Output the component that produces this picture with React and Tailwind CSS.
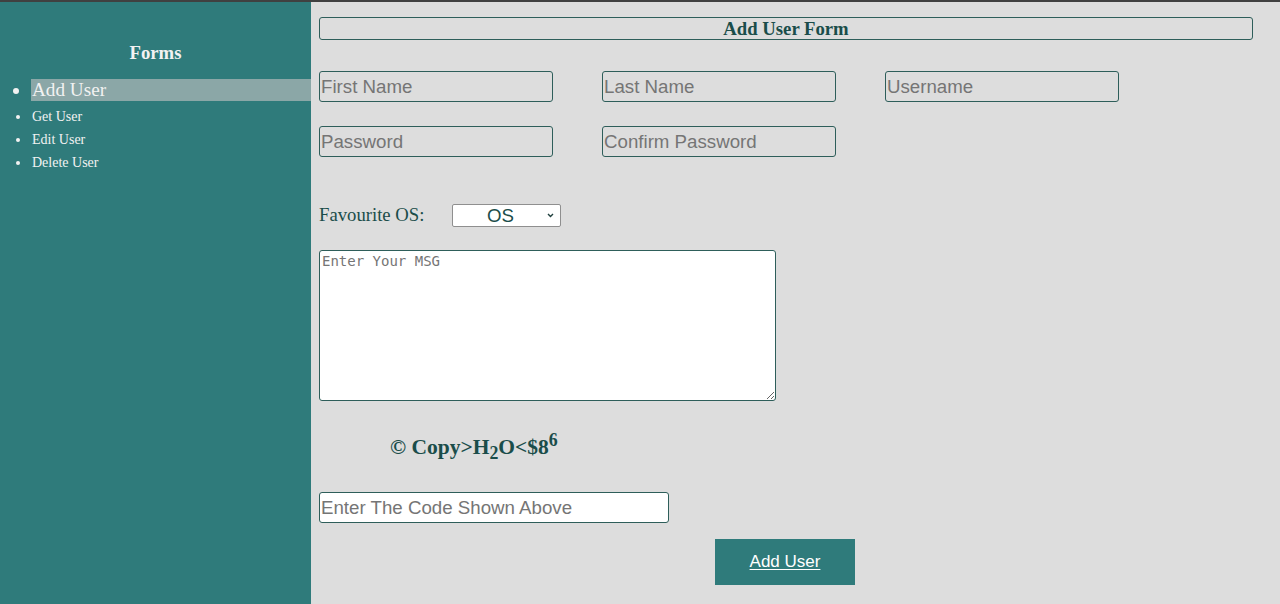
import React from "react";

export default function App() {
  const serif = { fontFamily: '"Liberation Serif", "Times New Roman", serif' };
  const inputCls =
    "w-[234px] h-[31px] border border-[#2e5e5a] rounded-[3px] bg-transparent px-[1px] text-[18.7px] text-[#1a4d4a] placeholder:text-[#757575] outline-none";
  return (
    <div
      className="w-[1280px] h-[604px] flex border-t-2 border-[#404040] bg-[#dddddd] overflow-hidden"
      style={{ fontFamily: '"Liberation Sans", Arial, sans-serif' }}
    >
      <aside className="w-[311px] shrink-0 bg-[#2f7b7b] text-[#f2f2f2]" style={serif}>
        <h3 className="text-center font-bold text-[18.72px] leading-[22px] mt-[40px]">Forms</h3>
        <ul className="mt-[15px] list-disc pl-[31px]">
          <li className="text-[19.2px] leading-[22px] bg-[#8ba7a7] pl-[1px]">Add User</li>
          <li className="text-[14px] leading-[23px] mt-[4px] pl-[1px]">Get User</li>
          <li className="text-[14px] leading-[23px] pl-[1px]">Edit User</li>
          <li className="text-[14px] leading-[23px] pl-[1px]">Delete User</li>
        </ul>
      </aside>
      <main className="flex-1 pl-[8px] pr-[27px]">
        <div
          className="mt-[15px] h-[23px] border border-[#2e5e5a] rounded-[3px] flex items-center justify-center pt-[1px] text-[#1a4d4a] font-bold text-[18.72px]"
          style={serif}
        >
          Add User Form
        </div>
        <div className="mt-[31px] flex gap-[49px]">
          <input className={inputCls} placeholder="First Name" />
          <input className={inputCls} placeholder="Last Name" />
          <input className={inputCls} placeholder="Username" />
        </div>
        <div className="mt-[24px] flex gap-[49px]">
          <input className={inputCls} type="password" placeholder="Password" />
          <input className={inputCls} type="password" placeholder="Confirm Password" />
        </div>
        <div className="mt-[47px] flex items-center h-[23px]">
          <span className="text-[18.7px] text-[#1a4d4a] w-[133px]" style={serif}>
            Favourite OS:
          </span>
          <div className="relative w-[109px] h-[23px]">
            <select
              className="appearance-none w-full h-full bg-white border border-[#8f8f8f] rounded-[2px] text-[18.7px] leading-[21px] text-[#1a4d4a] text-center pr-[12px]"
              style={{ textAlignLast: "center" }}
              defaultValue="OS"
            >
              <option value="OS">OS</option>
              <option>Windows</option>
              <option>Linux</option>
              <option>macOS</option>
            </select>
            <svg
              className="absolute right-[7px] top-[9px] pointer-events-none"
              width="7"
              height="5"
              viewBox="0 0 7 5"
            >
              <path d="M1 1 L3.5 3.5 L6 1" fill="none" stroke="#1f3f3d" strokeWidth="1.4" />
            </svg>
          </div>
        </div>
        <textarea
          className="block mt-[23px] w-[457px] h-[151px] bg-white border border-[#2e5e5a] rounded-[3px] px-[2px] pt-[2px] text-[14px] leading-[17px] placeholder:text-[#757575]"
          style={{ fontFamily: '"DejaVu Sans Mono", monospace' }}
          placeholder="Enter Your MSG"
        />
        <div
          className="mt-[31px] ml-[71px] h-[28px] text-[21.5px] font-bold text-[#1a4d4a] leading-[28px] whitespace-nowrap"
          style={serif}
        >
          © Copy&gt;H<sub className="text-[0.83em] align-sub static leading-none">2</sub>O&lt;$8<sup className="text-[0.83em] align-super static leading-none">6</sup>
        </div>
        <input
          className="block mt-[32px] w-[350px] h-[31px] bg-white border border-[#2e5e5a] rounded-[3px] px-[1px] text-[18.7px] placeholder:text-[#757575] outline-none"
          placeholder="Enter The Code Shown Above"
        />
        <div className="mt-[16px] pl-[396px]">
          <button className="w-[140px] h-[46px] bg-[#2f7b7b] text-white text-[17px] underline underline-offset-2">
            Add User
          </button>
        </div>
      </main>
    </div>
  );
}
